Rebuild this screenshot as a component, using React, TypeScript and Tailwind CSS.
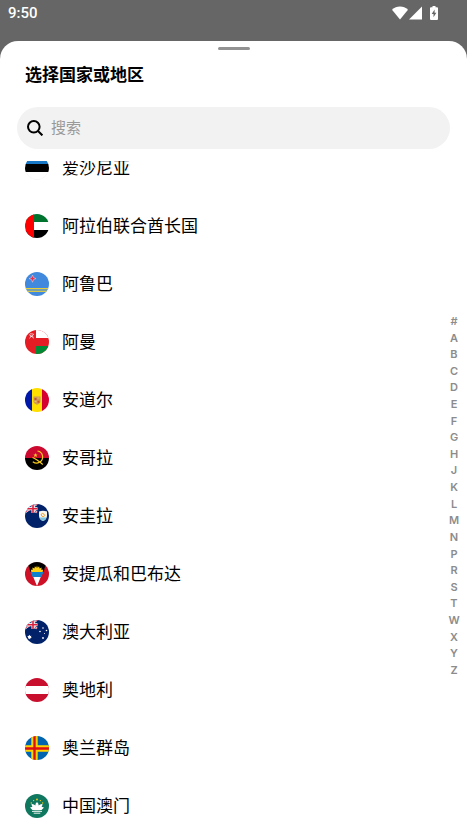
import type { ReactNode } from 'react';

const LETTERS = '#ABCDEFGHJKLMNPRSTWXYZ'.split('');

const COUNTRIES: { name: string, flag: ReactNode }[] = [
    {
        name: '爱沙尼亚',
        flag: (
            <>
                <rect width="24" height="24" fill="#fff" />
                <rect width="24" height="8" fill="#1878c8" />
                <rect y="8" width="24" height="8" fill="#000" />
                <circle cx="12" cy="12" r="11.8" fill="none" stroke="#000" strokeOpacity="0.08" strokeWidth="0.5" />
            </>
        ),
    },
    {
        name: '阿拉伯联合酋长国',
        flag: (
            <>
                <rect width="24" height="24" fill="#fff" />
                <rect width="24" height="8" fill="#00732f" />
                <rect y="16" width="24" height="8" fill="#000" />
                <rect width="9" height="24" fill="#f00" />
            </>
        ),
    },
    {
        name: '阿鲁巴',
        flag: (
            <>
                <rect width="24" height="24" fill="#4189dd" />
                <rect y="16" width="24" height="1.3" fill="#e8cf3c" />
                <rect y="18.6" width="24" height="1.4" fill="#d9c94a" />
                <path d="M7.5 3l1 2.6L11 6.6l-2.5 1-1 2.7-1-2.7-2.5-1 2.5-1z" fill="#e0304f" stroke="#fff" strokeWidth="0.4" />
            </>
        ),
    },
    {
        name: '阿曼',
        flag: (
            <>
                <rect width="24" height="24" fill="#e51c23" />
                <rect x="11" width="13" height="8" fill="#fff" />
                <rect x="11" y="16" width="13" height="8" fill="#008a35" />
                <path d="M4 4.5l5 3.8M9 4L4.3 8.300M5 3.800l3.400.2M5 6.200h3.400" stroke="#fff" strokeOpacity="0.85" strokeWidth="0.8" />
            </>
        ),
    },
    {
        name: '安道尔',
        flag: (
            <>
                <rect width="7" height="24" fill="#0018a8" />
                <rect x="7" width="10" height="24" fill="#fedf00" />
                <rect x="17" width="7" height="24" fill="#d50032" />
                <path d="M8.500 8.500h7v5q0 2-3.500 3.200-3.500-1.200-3.500-3.200z" fill="#cf9a55" />
                <path d="M9.500 10h2v2h-2zM12.500 12.800h2v2h-2z" fill="#c7502e" />
                <path d="M12.500 10h2M9.500 13.500h2" stroke="#e9c558" />
            </>
        ),
    },
    {
        name: '安哥拉',
        flag: (
            <>
                <rect width="24" height="12" fill="#cc092f" />
                <rect y="12" width="24" height="12" fill="#000" />
                <path d="M12.500 5a6 6 0 0 1 1.800 11.300q-3 2-6.500-.6" fill="none" stroke="#f7cb1d" strokeWidth="1.200" />
                <path d="M7.500 11.500q4 1.500 10.300 7" fill="none" stroke="#f7cb1d" strokeWidth="1.200" />
                <path d="M10.500 7l.6 1.400 1.500.1-1.100 1 .3 1.500-1.300-.8-1.300.8.300-1.500-1.100-1 1.500-.1z" fill="#f7cb1d" />
            </>
        ),
    },
    {
        name: '安圭拉',
        flag: (
            <>
                <rect width="24" height="24" fill="#012169" />
                <UnionJack />
                <path d="M14 7.500q4-1.500 8 0v4.500q-.5 3.800-4 5-3.500-1.200-4-5z" fill="#f5f5ee" />
                <path d="M14.400 13.500h7.200q-.9 2.500-3.600 3.400-2.700-.9-3.600-3.400z" fill="#7dc3dd" />
                <path d="M16 10.500q1.500-2 3-.3 1.500 1.400-.2 2.400-2 .6-2.800-2.100z" fill="none" stroke="#ee9b22" strokeWidth="1" />
            </>
        ),
    },
    {
        name: '安提瓜和巴布达',
        flag: (
            <>
                <rect width="24" height="24" fill="#ce1126" />
                <path d="M2 0h20L12 24z" fill="#fff" />
                <path d="M2 0h20l-3.600 10H5.600z" fill="#000" />
                <path d="M6.300 10l-.4-2.500 1.700.4-.2-2.300 2 1 .5-2.400 1.400 1.500.7-2.200.7 2.200 1.400-1.500.5 2.400 2-1-.2 2.300 1.700-.4-.4 2.500z" fill="#fcd116" />
                <path d="M5.600 10h12.800l-2.100 5H7.700z" fill="#0e83cd" />
            </>
        ),
    },
    {
        name: '澳大利亚',
        flag: (
            <>
                <rect width="24" height="24" fill="#012169" />
                <UnionJack />
                <path d="M4.500 14.800l.6 1.100 1.300-.2-.5 1.200.9 1-1.300.2-.5 1.300-.9-1-1.300.2.400-1.300-1-1 1.300-.2z" fill="#fff" />
                <g fill="#fff">
                    <circle cx="18" cy="8" r="0.8" />
                    <circle cx="15" cy="11.500" r="0.8" />
                    <circle cx="21.500" cy="10.500" r="0.8" />
                    <circle cx="19.500" cy="13.500" r="0.5" />
                    <circle cx="18" cy="18" r="0.9" />
                </g>
            </>
        ),
    },
    {
        name: '奥地利',
        flag: (
            <>
                <rect width="24" height="24" fill="#c8102e" />
                <rect y="8" width="24" height="8" fill="#fff" />
            </>
        ),
    },
    {
        name: '奥兰群岛',
        flag: (
            <>
                <rect width="24" height="24" fill="#0064ae" />
                <path d="M9.500 0v24M0 12.500h24" stroke="#ffd300" strokeWidth="6.400" />
                <path d="M9.500 0v24M0 12.500h24" stroke="#da0e15" strokeWidth="2.400" />
            </>
        ),
    },
    {
        name: '中国澳门',
        flag: (
            <>
                <rect width="24" height="24" fill="#10785e" />
                <path d="M12 8q2 1.500 1.600 3.500 1.800-1.800 3.900-1.500-.1 1.700-.9 3 1.400-.2 2.400.4-1.600 2.700-4.800 2.900H9.800q-3.200-.2-4.800-2.900 1-.6 2.400-.4-.8-1.300-.9-3 2.100-.3 3.900 1.500Q10 9.500 12 8z" fill="#fff" />
                <path d="M7 17.400h10M8.700 19.200h6.600" stroke="#fff" strokeWidth="0.9" />
                <g fill="#fbd116">
                    <circle cx="12" cy="5.500" r="0.9" />
                    <circle cx="8.600" cy="6.600" r="0.7" />
                    <circle cx="15.400" cy="6.600" r="0.7" />
                    <circle cx="6.300" cy="9" r="0.7" />
                    <circle cx="17.700" cy="9" r="0.7" />
                </g>
            </>
        ),
    },
];

export default function App() {
    return (
        <div className="flex flex-col h-screen overflow-hidden bg-[#666666] text-black font-['Roboto','Noto_Sans_CJK_SC',sans-serif]">
            <StatusBar />

            {/* Bottom sheet */}
            <main className="relative flex flex-col flex-1 min-h-0 mt-[15px] bg-white rounded-t-[18px]">
                <div className="w-8 h-[3px] mt-[6px] mx-auto shrink-0 rounded-full bg-[#929292]"></div>
                <h1 className="mt-3 px-[25px] text-[17px] leading-[26px] font-bold">选择国家或地区</h1>

                {/* Search */}
                <label className="flex items-center gap-2 h-[42px] mt-[19px] mx-[17px] px-[10px] shrink-0 rounded-full bg-[#f2f2f2]">
                    <svg className="size-4 shrink-0" viewBox="0 0 16 16" fill="none" stroke="#000" strokeWidth="2">
                        <circle cx="6.800" cy="6.800" r="5.800" />
                        <path d="M11 11l4.400 4.400" />
                    </svg>
                    <input
                        type="text"
                        aria-label="搜索"
                        placeholder="搜索"
                        className="flex-1 min-w-0 bg-transparent text-[15px] leading-5 outline-none placeholder:text-[#999999]"
                    />
                </label>

                {/* Country list */}
                <div className="flex-1 min-h-0 mt-3 overflow-hidden">
                    <ul className="-mt-[22px]">
                        {COUNTRIES.map((country) => (
                            <li key={country.name}>
                                <button className="flex items-center gap-[13px] w-full h-[58px] px-[25px] text-left text-[17px] leading-6">
                                    <svg className="size-6 shrink-0 rounded-full" viewBox="0 0 24 24">{country.flag}</svg>
                                    <span>{country.name}</span>
                                </button>
                            </li>
                        ))}
                    </ul>
                </div>

                {/* Letter index */}
                <nav className="absolute right-[5px] top-[272px] flex flex-col justify-between w-4 h-[365px]">
                    {LETTERS.map((letter) => (
                        <button key={letter} className="h-4 text-center text-[11px] leading-4 font-semibold text-[#8c8c8c] font-['Inter',sans-serif]">
                            {letter}
                        </button>
                    ))}
                </nav>
            </main>
        </div>
    );
}

function StatusBar() {
    return (
        <header className="flex items-center justify-between h-[26px] pl-2 pr-[29px] shrink-0 text-white">
            <span className="text-[15px] leading-5 font-medium">9:50</span>
            <div className="flex items-center">
                <svg className="w-4 h-[14px]" viewBox="0 0 16 14" fill="#fff">
                    <path d="M8 13.500L0 3.800Q3.500.5 8 .5t8 3.300z" />
                </svg>
                <svg className="w-[14px] h-[14px]" viewBox="0 0 14 14" fill="#fff">
                    <path d="M14 .5v13H1z" />
                </svg>
                <svg className="w-2 h-[14px] ml-2" viewBox="0 0 8 14" fill="#fff">
                    <path d="M2.500 0h3v1.200H7q1 0 1 1V13q0 1-1 1H1q-1 0-1-1V2.200q0-1 1-1h1.500z" />
                    <path d="M4.600 3.500L1.700 8h1.800v3.300L6.400 6.700H4.600z" fill="#666" />
                </svg>
            </div>
        </header>
    );
}

function UnionJack() {
    return (
        <g>
            <path d="M0 0l12 8.500M12 0L0 8.500" stroke="#fff" strokeWidth="1.800" />
            <path d="M0 0l12 8.500M12 0L0 8.500" stroke="#d8203c" strokeWidth="0.8" />
            <path d="M8 0v9M0 4.800h12.500" stroke="#fff" strokeWidth="3" />
            <path d="M8 0v9M0 4.800h12.500" stroke="#d8203c" strokeWidth="1.600" />
        </g>
    );
}
